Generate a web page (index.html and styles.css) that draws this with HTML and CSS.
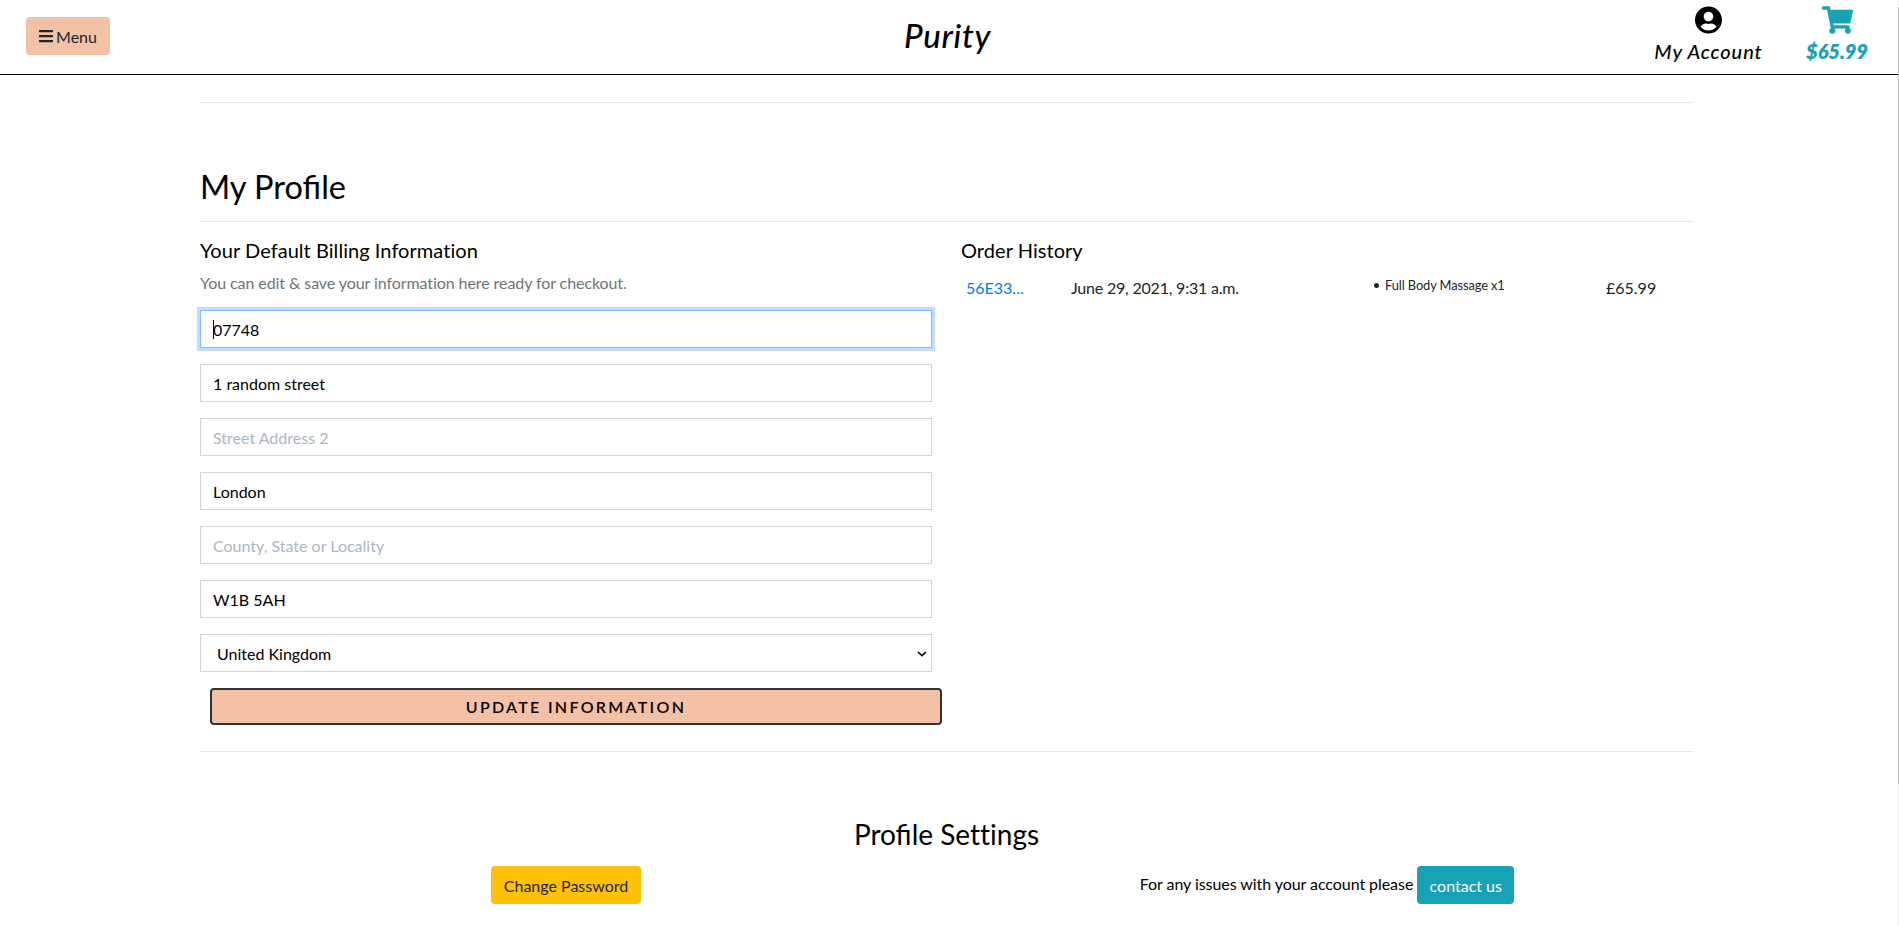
FILE: index.html
```html
<!DOCTYPE html>
<html lang="en">
<head>
<meta charset="utf-8">
<title>Purity - My Profile</title>
<link rel="stylesheet" href="styles.css">
</head>
<body>
<header class="site-header">
  <button class="btn btn-menu" type="button">
    <svg class="icon-bars" viewBox="0 0 448 512" aria-hidden="true"><path d="M16 132h416c8.800 0 16-7.200 16-16V76c0-8.800-7.200-16-16-16H16C7.200 60 0 67.200 0 76v40c0 8.800 7.200 16 16 16zm0 160h416c8.800 0 16-7.200 16-16v-40c0-8.800-7.200-16-16-16H16c-8.800 0-16 7.200-16 16v40c0 8.800 7.200 16 16 16zm0 160h416c8.800 0 16-7.200 16-16v-40c0-8.800-7.200-16-16-16H16c-8.800 0-16 7.200-16 16v40c0 8.800 7.200 16 16 16z"/></svg>
    <span>Menu</span>
  </button>
  <a class="brand"><span class="brand-text">Purity</span></a>
  <nav class="header-links">
    <a class="header-link account">
      <svg class="icon-user" viewBox="0 0 496 512" aria-hidden="true"><path d="M248 8C111 8 0 119 0 256s111 248 248 248 248-111 248-248S385 8 248 8zm0 96c48.600 0 88 39.400 88 88s-39.400 88-88 88-88-39.400-88-88 39.400-88 88-88zm0 344c-58.700 0-111.300-26.600-146.500-68.200 18.800-35.400 55.600-59.800 98.500-59.800 2.400 0 4.800.4 7.100 1.100 13 4.200 26.600 6.900 40.900 6.900s28-2.700 40.900-6.900c2.300-.7 4.700-1.100 7.100-1.100 42.900 0 79.700 24.400 98.500 59.800C359.300 421.400 306.700 448 248 448z"/></svg>
      <span class="link-label">My Account</span>
    </a>
    <a class="header-link cart">
      <svg class="icon-cart" viewBox="0 0 576 512" aria-hidden="true"><path d="M528.120 301.319l47.273-208C578.806 78.301 567.391 64 551.990 64H159.208l-9.166-44.810C147.758 8.021 137.930 0 126.529 0H24C10.745 0 0 10.745 0 24v16c0 13.255 10.745 24 24 24h69.883l70.248 343.435C147.325 417.100 136 435.222 136 456c0 30.928 25.072 56 56 56s56-25.072 56-56c0-15.674-6.447-29.835-16.824-40h209.647C430.447 426.165 424 440.326 424 456c0 30.928 25.072 56 56 56s56-25.072 56-56c0-22.172-12.888-41.332-31.579-50.405l5.517-24.276c3.413-15.018-8.002-29.319-23.403-29.319H218.117l-6.545-32h293.145c11.206 0 20.920-7.754 23.403-18.681z"/></svg>
      <span class="link-label">$65.99</span>
    </a>
  </nav>
</header>
<main class="container">
  <hr class="rule">
  <h2 class="page-title">My Profile</h2>
  <hr class="rule">
  <div class="columns">
    <section class="billing">
      <h5 class="section-title">Your Default Billing Information</h5>
      <p class="muted">You can edit &amp; save your information here ready for checkout.</p>
      <form class="profile-form">
        <div class="field focused"><span class="caret"></span>07748</div>
        <div class="field">1 random street</div>
        <div class="field placeholder">Street Address 2</div>
        <div class="field">London</div>
        <div class="field placeholder">County, State or Locality</div>
        <div class="field">W1B 5AH</div>
        <div class="field select"><span>United Kingdom</span>
          <svg class="chevron" viewBox="0 0 10 6" aria-hidden="true"><path d="M1 1l4 3.700L9 1"/></svg>
        </div>
        <button class="update" type="button"><span>UPDATE INFORMATION</span></button>
      </form>
    </section>
    <section class="orders">
      <h5 class="section-title">Order History</h5>
      <div class="order-row">
        <a class="order-link">56E33...</a>
        <span class="order-date">June 29, 2021, 9:31 a.m.</span>
        <span class="order-item">Full Body Massage x1</span>
        <span>£65.99</span>
      </div>
    </section>
  </div>
  <hr class="rule">
  <h3 class="settings-title">Profile <span class="plain">Settings</span></h3>
  <div class="settings">
    <div class="setting"><button class="btn btn-warning" type="button">Change Password</button></div>
    <div class="setting"><span class="help">For any issues with your account please</span><a class="btn btn-info">contact us</a></div>
  </div>
</main>
<div class="scroll-edge"></div>
</body>
</html>
```
FILE: styles.css
```css
* { box-sizing: border-box; }

body {
  margin: 0;
  height: 926px;
  overflow: hidden;
  background: #fff;
  color: #000;
  font: 400 16px/24px Lato, sans-serif;
}

h2, h3, h5, p { margin: 0; font-weight: 400; }

.site-header {
  display: grid;
  grid-template-columns: 1fr auto 1fr;
  height: 75px;
  padding: 0 30px 0 26px;
  border-bottom: 1px solid #000;
}

.btn {
  display: inline-flex;
  align-items: center;
  justify-content: center;
  height: 38px;
  padding: 2px 0 0;
  border: 0;
  border-radius: 4px;
  font: inherit;
  white-space: nowrap;
}

.btn-menu {
  gap: 3px;
  width: 84px;
  margin-top: 17px;
  background: #f3c1a5;
  color: #212529;
}

.icon-bars { width: 14px; height: 16px; margin-top: -2px; fill: #212529; }

.brand {
  display: flex;
  justify-content: center;
  width: 88px;
  padding-top: 15px;
  font: italic 500 33px/40px Lato, sans-serif;
  letter-spacing: 0.700px;
}

.header-links { display: flex; justify-content: flex-end; gap: 42px; }

.header-link {
  display: flex;
  flex-direction: column;
  align-items: center;
  white-space: nowrap;
  font: italic 500 20px/24px Lato, sans-serif;
}

.account { width: 109px; }
.account .link-label { letter-spacing: 0.9px; }
.cart { width: 64px; color: #17a2b8; font-weight: 800; }
.icon-user { width: 27px; height: 28px; margin-top: 6px; }
.icon-cart { width: 31px; height: 28px; margin-top: 6px; fill: #17a2b8; }
.header-link .link-label { margin-top: 5px; }

.container { width: 1493px; margin-left: 200px; }

.rule { height: 1px; margin: 0; border: 0; background: #e5e5e5; }
.container > .rule:first-child { margin-top: 27px; }

.page-title { padding: 64px 0 15px; font-size: 32.500px; line-height: 39px; }

.columns { display: grid; grid-template-columns: 732px 731px; column-gap: 30px; }
.orders { margin-left: -1px; }

.section-title {
  padding-top: 16px;
  font-size: 20px;
  line-height: 24px;
  letter-spacing: 0.050px;
}

.muted { padding-top: 9px; color: #6c757d; letter-spacing: -0.080px; }

.profile-form {
  display: flex;
  flex-direction: column;
  gap: 16px;
  padding-top: 15px;
}

.field {
  display: flex;
  align-items: center;
  height: 38px;
  padding: 2px 12px 0;
  border: 1px solid #ced4da;
}

.focused {
  position: relative;
  border-color: #80bdff;
  box-shadow: 0 0 0 3px #bfdeff;
}

.caret {
  position: absolute;
  left: 12px;
  top: 9px;
  width: 1px;
  height: 19px;
  background: #000;
}

.placeholder { color: #aab7c4; }
.select { justify-content: space-between; padding: 2px 4px 0 16px; }
.chevron { width: 10px; height: 6px; fill: none; stroke: #000; stroke-width: 1.700; }

.update {
  width: 732px;
  height: 37px;
  margin-left: 10px;
  padding: 0;
  border: 2px solid #343434;
  border-radius: 4px;
  background: #f3c1a5;
  color: #000;
  font: 600 16px/24px Lato, sans-serif;
  letter-spacing: 2.300px;
}

.order-row {
  display: grid;
  grid-template-columns: 105px 314px 221px auto;
  justify-content: start;
  padding: 14px 0 0 5px;
  color: #212529;
}

.order-link { color: #007bff; }
.order-date { letter-spacing: -0.200px; }
.order-item { margin-top: -3px; font-size: 12.800px; letter-spacing: -0.080px; }
.order-item::before {
  content: "";
  display: inline-block;
  width: 5px;
  height: 5px;
  margin: 0 6px 2px -11px;
  border-radius: 50%;
  background: #212529;
}

.columns + .rule { margin-top: 26px; }
.settings-title { padding-top: 65px; text-align: center; font-size: 28px; line-height: 34px; }
.plain { font-variant-ligatures: none; }
.settings { display: grid; grid-template-columns: 732px 732px; gap: 29px; padding-top: 15px; }
.setting { display: flex; justify-content: center; }
.help { margin-top: 6px; margin-right: 4px; white-space: nowrap; letter-spacing: -0.060px; }
.btn-warning { width: 150px; background: #ffc107; color: #212529; }
.btn-info { width: 97px; background: #17a2b8; color: #fff; }

.scroll-edge {
  position: absolute;
  top: 0;
  right: 0;
  width: 1px;
  height: 926px;
  background: linear-gradient(#f1f1f1 7px, #c1c1c1 7px, #c1c1c1 784px, #f1f1f1 784px);
}
```
